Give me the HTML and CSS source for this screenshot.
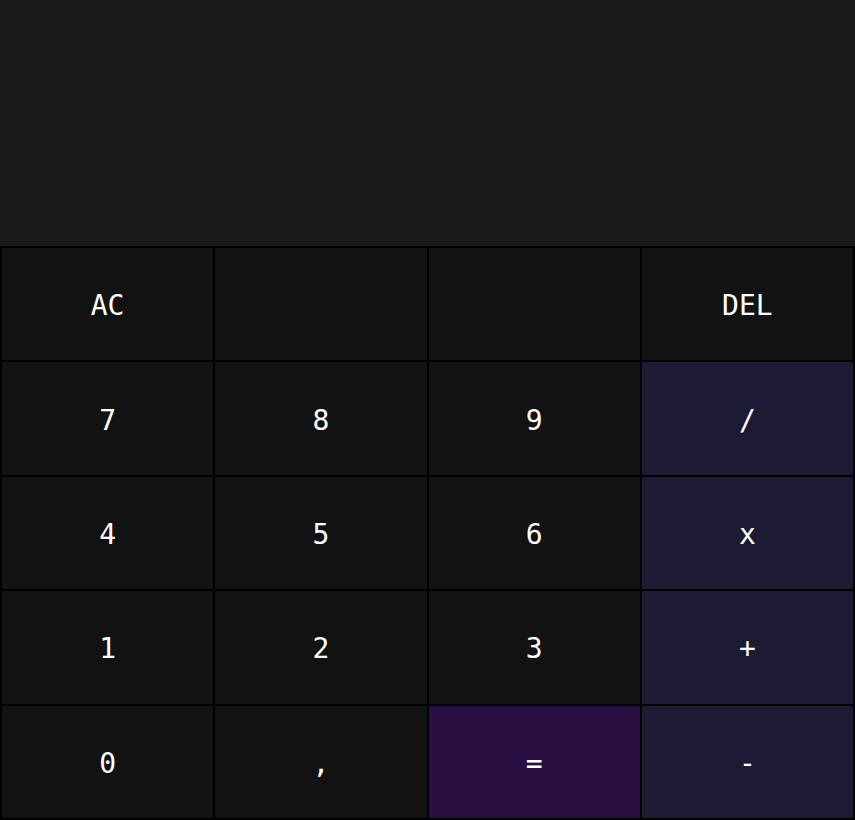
FILE: index.html
```html
<!DOCTYPE html>
<html>
<head>
<meta charset="utf-8">
<link rel="stylesheet" href="styles.css">
</head>
<body>
<div class="calc">
  <div class="display"></div>
  <div class="keys">
    <button class="key">AC</button>
    <button class="key"></button>
    <button class="key"></button>
    <button class="key">DEL</button>
    <button class="key">7</button>
    <button class="key">8</button>
    <button class="key">9</button>
    <button class="key op">/</button>
    <button class="key">4</button>
    <button class="key">5</button>
    <button class="key">6</button>
    <button class="key op">x</button>
    <button class="key">1</button>
    <button class="key">2</button>
    <button class="key">3</button>
    <button class="key op">+</button>
    <button class="key">0</button>
    <button class="key">,</button>
    <button class="key eq">=</button>
    <button class="key op">-</button>
  </div>
</div>
</body>
</html>
```
FILE: styles.css
```css
html, body {
  margin: 0;
  padding: 0;
  height: 100%;
  background: #000;
}
.calc {
  display: flex;
  flex-direction: column;
  height: 820px;
  width: 855px;
}
.display {
  height: 246px;
  background: #1a1a1a;
  flex: none;
}
.keys {
  flex: 1;
  display: grid;
  grid-template-columns: repeat(4, 1fr);
  grid-template-rows: repeat(5, 1fr);
  background: #000;
  border: 1px solid #000;
}
.key {
  margin: 0;
  border: 1px solid #000;
  background: #121212;
  color: #fff;
  font-family: "DejaVu Sans Mono", monospace;
  font-size: 28px;
  padding: 3px 0 0 0;
}
.key.op {
  background: #1c1b33;
}
.key.eq {
  background: #2a1042;
}
```
